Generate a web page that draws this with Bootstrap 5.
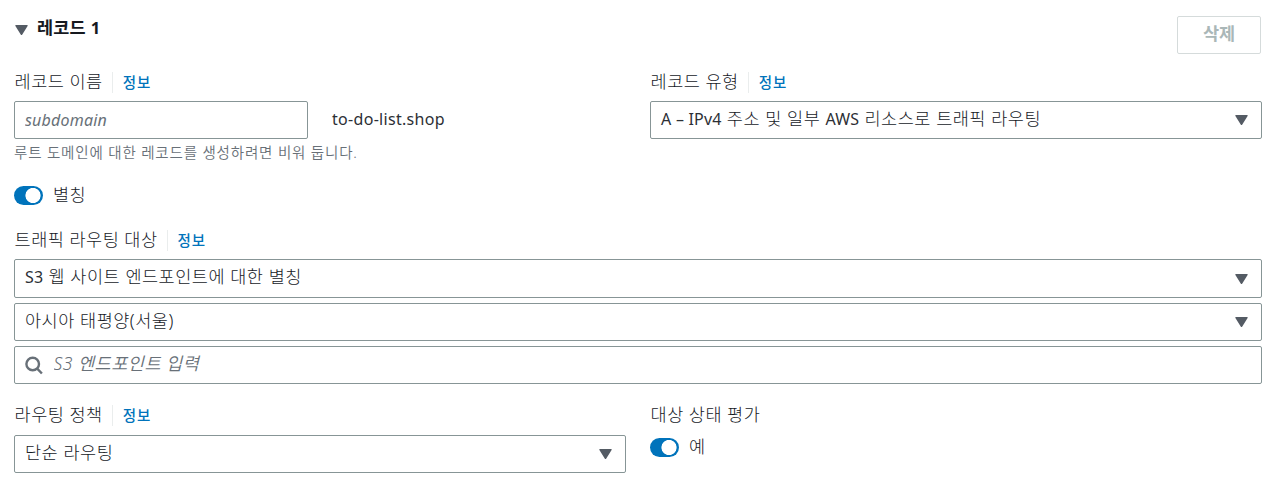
<!DOCTYPE html>
<html lang="ko">
<head>
<meta charset="utf-8">
<meta name="viewport" content="width=device-width, initial-scale=1">
<title>레코드 1</title>
<link href="https://cdn.jsdelivr.net/npm/bootstrap@5.3.0/dist/css/bootstrap.min.css" rel="stylesheet">
<style>
  body { font-family: "Noto Sans", "Noto Sans CJK KR", sans-serif; font-size: 17.5px; line-height: 21px; color: #16191f; font-weight: 300; letter-spacing: .5px; }
  .record { padding: 16px 13px 0 14px; }
  .record .row { --bs-gutter-x: 24px; }
  .record-title { font-size: 17.5px; line-height: 22px; margin: 0 0 0 9px; font-weight: 700; letter-spacing: .2px; }
  .record-title span { font-size: 16.5px; }
  .btn-remove { width: 84px; height: 38px; margin-right: 1px; padding: 0 0 3px; border: 1px solid #d5dbdb; border-radius: 2px; color: #aab7b8; font-size: 17.5px; font-weight: 700; background: #fff; }
  .btn-remove:disabled { opacity: 1; color: #aab7b8; border-color: #d5dbdb; }
  .field-label { height: 21px; margin-bottom: 8px; white-space: nowrap; }
  .field-label label { position: relative; top: -1px; margin-left: .6px; }
  .info-link { margin-left: 9.5px; padding-left: 9.5px; border-left: 1px solid #eaeded; color: #0073bb; font-size: 14.5px; font-weight: 500; letter-spacing: 1px; text-decoration: none; height: 21px; }
  .field-box { height: 38px; padding: 0 10px; border: 1px solid #879596; border-radius: 2px; background: #fff; white-space: nowrap; }
  .field-box > span { padding-bottom: 3px; word-spacing: .2px; }
  input.field-box { display: block; width: 294px; font-size: 16px; font-style: italic; outline: 0; color: #16191f; letter-spacing: .2px; }
  input.field-box::placeholder { color: #687078; opacity: 1; }
  input.search-input { border: 0; flex: 1; padding: 0 0 4px; margin-left: 10.5px; height: 34px; font-size: 17.5px; font-style: italic; outline: 0; min-width: 0; font-weight: 350; letter-spacing: .5px; }
  input.search-input::placeholder { color: #687078; opacity: 1; }
  .latin { font-size: 16px; font-weight: 400; letter-spacing: .15px; color: #2c2f35; }
  .domain { letter-spacing: .3px; padding-bottom: 2px; }
  .hint { color: #687078; font-size: 14.5px; line-height: 18px; margin-top: 4px; margin-bottom: 1px; letter-spacing: .83px; font-weight: 350; }
  .caret { width: 13px; height: 10px; fill: #545b64; flex: none; }
  .field-box .caret { margin: 0 3px 0 auto; }
  .switch-box.form-check-input { width: 29px; height: 19px; margin: 0; border: 0; border-radius: 10px; background: #0073bb radial-gradient(circle at 19px 9.5px, #fff 7.2px, transparent 7.9px); }
  .switch-row label { margin-left: 10px; position: relative; top: -1px; }
</style>
</head>
<body>
<main class="record">
  <header class="d-flex justify-content-between align-items-start">
    <div class="d-flex align-items-center">
      <svg class="caret" style="margin:5px 0 0 1px" viewBox="0 0 13 10"><path d="M1 0h11q1.3 0 .6 1L7.3 9.4q-.8 1.1-1.6 0L.4 1Q-.3 0 1 0z"/></svg>
      <h2 class="record-title">레코드 <span>1</span></h2>
    </div>
    <button class="btn btn-remove" type="button" disabled>삭제</button>
  </header>

  <div class="row" style="margin-top:18px">
    <div class="col-6">
      <div class="field-label d-flex align-items-center"><label for="name">레코드 이름</label><a class="info-link" href="#">정보</a></div>
      <div class="d-flex align-items-center gap-4">
        <input id="name" class="field-box" type="text" placeholder="subdomain">
        <span class="latin domain">to-do-list.shop</span>
      </div>
      <div class="hint">루트 도메인에 대한 레코드를 생성하려면 비워 둡니다.</div>
    </div>
    <div class="col-6">
      <div class="field-label d-flex align-items-center"><label>레코드 유형</label><a class="info-link" href="#">정보</a></div>
      <div class="field-box d-flex align-items-center"><span><span class="latin">A – IPv4</span> 주소 및 일부 <span class="latin">AWS</span> 리소스로 트래픽 라우팅</span><svg class="caret" viewBox="0 0 13 10"><path d="M1 0h11q1.3 0 .6 1L7.3 9.4q-.8 1.1-1.6 0L.4 1Q-.3 0 1 0z"/></svg></div>
    </div>
  </div>

  <div class="switch-row d-flex align-items-center" style="margin-top:24px;height:19px">
    <input id="alias" class="form-check-input switch-box" type="checkbox" role="switch" checked><label for="alias">별칭</label>
  </div>

  <section style="margin-top:25px">
    <div class="field-label d-flex align-items-center"><label>트래픽 라우팅 대상</label><a class="info-link" href="#">정보</a></div>
    <div class="d-grid" style="gap:5px">
      <div class="field-box d-flex align-items-center" style="height:39px"><span><span class="latin">S3</span> 웹 사이트 엔드포인트에 대한 별칭</span><svg class="caret" viewBox="0 0 13 10"><path d="M1 0h11q1.3 0 .6 1L7.3 9.4q-.8 1.1-1.6 0L.4 1Q-.3 0 1 0z"/></svg></div>
      <div class="field-box d-flex align-items-center"><span>아시아 태평양(서울)</span><svg class="caret" viewBox="0 0 13 10"><path d="M1 0h11q1.3 0 .6 1L7.3 9.4q-.8 1.1-1.6 0L.4 1Q-.3 0 1 0z"/></svg></div>
      <div class="field-box d-flex align-items-center">
        <svg width="18" height="19" viewBox="0 0 18 19" fill="none" stroke="#687078" stroke-width="2.4"><circle cx="7.7" cy="8" r="6.3"/><path d="M12.2 12.6l4.7 4.9"/></svg>
        <input class="search-input" type="text" placeholder="S3 엔드포인트 입력">
      </div>
    </div>
  </section>

  <div class="row" style="margin-top:21px">
    <div class="col-6">
      <div class="field-label d-flex align-items-center" style="margin-bottom:9px"><label>라우팅 정책</label><a class="info-link" href="#">정보</a></div>
      <div class="field-box d-flex align-items-center"><span>단순 라우팅</span><svg class="caret" viewBox="0 0 13 10"><path d="M1 0h11q1.3 0 .6 1L7.3 9.4q-.8 1.1-1.6 0L.4 1Q-.3 0 1 0z"/></svg></div>
    </div>
    <div class="col-6">
      <div class="field-label d-flex align-items-center"><label>대상 상태 평가</label></div>
      <div class="switch-row d-flex align-items-center" style="margin-top:12px;height:19px">
        <input id="health" class="form-check-input switch-box" type="checkbox" role="switch" checked><label for="health">예</label>
      </div>
    </div>
  </div>
</main>
<script src="https://cdn.jsdelivr.net/npm/bootstrap@5.3.0/dist/js/bootstrap.bundle.min.js"></script>
</body>
</html>
